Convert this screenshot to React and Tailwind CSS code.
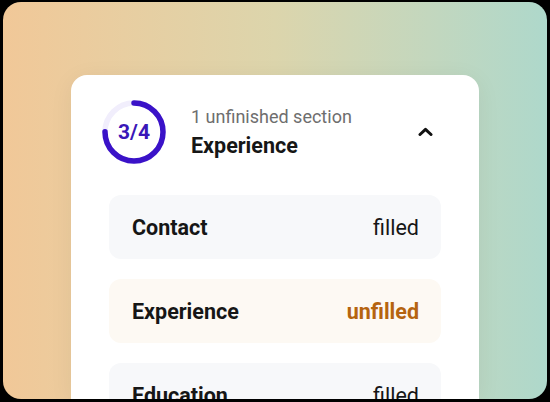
import React from "react";

function Ring() {
  const r = 29;
  const c = 2 * Math.PI * r;
  return (
    <div className="relative w-[64px] h-[64px] shrink-0">
      <svg width="64" height="64" viewBox="0 0 64 64" className="absolute inset-0">
        <circle cx="32" cy="32" r={r} fill="none" stroke="#f1eefc" strokeWidth="5.5" />
        <circle
          cx="32"
          cy="32"
          r={r}
          fill="none"
          stroke="#3a12c8"
          strokeWidth="5.5"
          strokeLinecap="round"
          strokeDasharray={`${c * 0.75} ${c}`}
          transform="rotate(-90 32 32)"
        />
      </svg>
      <div className="absolute inset-0 flex items-center justify-center text-[21px] font-bold text-[#3a17b8] leading-none pt-[1px]">
        3/4
      </div>
    </div>
  );
}

function Row({ label, status, warm }) {
  return (
    <div
      className={`flex items-center justify-between h-[64px] rounded-[12px] pl-[23px] pr-[22px] ${
        warm ? "bg-[#fdf9f3]" : "bg-[#f7f8fa]"
      }`}
    >
      <span className="text-[21.5px] font-bold text-[#161616] pt-[2px]">{label}</span>
      <span
        className={
          warm
            ? "text-[21.5px] font-bold text-[#b5640f] pt-[2px]"
            : "text-[21.5px] font-normal text-[#161616] pt-[2px]"
        }
      >
        {status}
      </span>
    </div>
  );
}

export default function App() {
  return (
    <div
      className="w-[550px] h-[402px] bg-black pt-[2px] pb-[3px] px-[3px]"
      style={{ fontFamily: "Roboto, 'Liberation Sans', sans-serif" }}
    >
      <div className="w-full h-full rounded-[18px] overflow-hidden bg-gradient-to-r from-[#f1c898] via-[#dcd5ac] to-[#aed8cb] flex justify-center pt-[73px]">
        <div className="w-[408px] h-full bg-white rounded-t-[16px] shadow-[0_4px_24px_rgba(0,0,0,0.06)] flex flex-col">
          <div className="flex items-center pl-[31px] pr-[46px] pt-[25px]">
            <Ring />
            <div className="flex flex-col ml-[25px] flex-1">
              <span className="text-[18px] text-[#6e6e6e] leading-[24px] mt-[1px]">1 unfinished section</span>
              <span className="text-[21.5px] font-bold text-[#161616] leading-[30px] mt-[2px]">Experience</span>
            </div>
            <svg width="15" height="9" viewBox="0 0 15 9" className="mt-[-2px]">
              <path d="M2 7.5 L7.5 2.3 L13 7.5" fill="none" stroke="#111" strokeWidth="3" strokeLinecap="round" strokeLinejoin="round" />
            </svg>
          </div>
          <div className="flex flex-col gap-[20px] px-[38px] mt-[31px]">
            <Row label="Contact" status="filled" />
            <Row label="Experience" status="unfilled" warm />
            <Row label="Education" status="filled" />
          </div>
        </div>
      </div>
    </div>
  );
}
